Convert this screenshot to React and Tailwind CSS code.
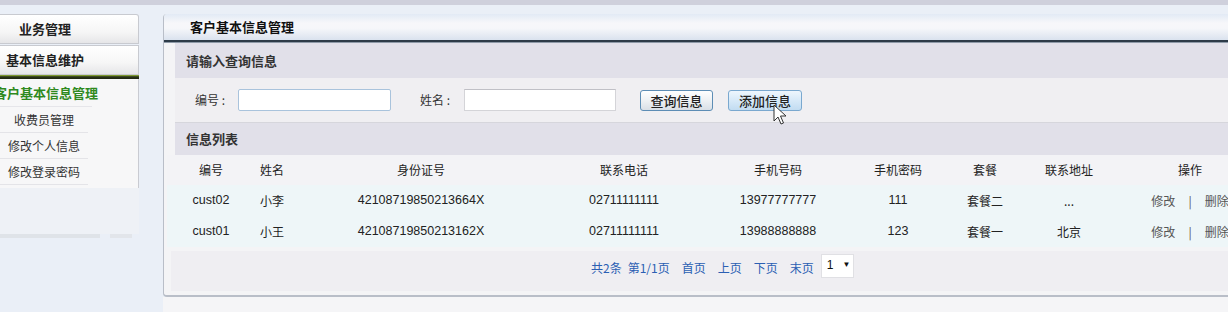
import React from "react";

const cols = [
  { w: "w-[88px]", h: "编号" },
  { w: "w-[34px]", h: "姓名" },
  { w: "w-[264px]", h: "身份证号" },
  { w: "w-[142px]", h: "联系电话" },
  { w: "w-[166px]", h: "手机号码" },
  { w: "w-[74px]", h: "手机密码" },
  { w: "w-[100px]", h: "套餐" },
  { w: "w-[68px]", h: "联系地址" },
  { w: "w-[174px]", h: "操作" },
];

const rows = [
  ["cust02", "小李", "42108719850213664X", "02711111111", "13977777777", "111", "套餐二", "...", null],
  ["cust01", "小王", "42108719850213162X", "02711111111", "13988888888", "123", "套餐一", "北京", null],
];

function Cursor() {
  return (
    <svg className="absolute left-[773px] top-[104px]" width="16" height="22" viewBox="0 0 16 22">
      <path d="M1 1 L1 17 L5 13 L8 20 L10.5 19 L7.5 12 L13 12 Z" fill="#fff" stroke="#333" strokeWidth="1" strokeLinejoin="round" />
    </svg>
  );
}

export default function App() {
  return (
    <div className="relative w-[1228px] h-[312px] overflow-hidden bg-[#eaeff7] font-['Liberation_Sans','Noto_Sans_CJK_SC',sans-serif] text-[12px] text-[#222]">
      <div className="h-[5px] bg-[#cfd0dc]" />
      <div className="flex pt-[9px]">
        {/* Sidebar */}
        <div className="w-[139px] shrink-0 flex flex-col">
          <div className="h-[30px] flex items-center border border-l-0 border-[#c8cad0] rounded-tr-[3px] bg-[linear-gradient(to_bottom,#ffffff,#f6f6f6_60%,#e6e6e8)] font-['Noto_Sans_CJK_SC',sans-serif] font-bold text-[13px] text-[#222]">
            <span className="w-[90px] text-center whitespace-nowrap">业务管理</span>
          </div>
          <div className="mt-[1px] h-[30px] flex items-center border border-l-0 border-[#c8cad0] bg-[linear-gradient(to_bottom,#ffffff,#f6f6f6_60%,#e6e6e8)] font-['Noto_Sans_CJK_SC',sans-serif] font-bold text-[13px] text-[#222]">
            <span className="w-[90px] text-center whitespace-nowrap">基本信息维护</span>
          </div>
          <div className="h-[4px] bg-[linear-gradient(to_bottom,#9fbf3a,#2a3418_45%,#1d2410)]" />
          <div className="h-[109px] bg-[#f7f7f8] border-r border-[#c9cbd2] font-['Noto_Sans_CJK_SC',sans-serif]">
            <div className="w-[92px] h-[28px] flex items-center justify-center whitespace-nowrap font-bold text-[13px] text-[#2f8a1f] border-b border-[#e6e6ea]">
              客户基本信息管理
            </div>
            {["收费员管理", "修改个人信息", "修改登录密码"].map((t) => (
              <div key={t} className="w-[88px] h-[26px] flex items-center justify-center whitespace-nowrap text-[12px] text-[#333] border-b border-[#e4e4e8]">
                {t}
              </div>
            ))}
          </div>
          <div className="h-[46px] bg-[#eef1f6]" />
          <div className="flex gap-[10px] h-[4px]">
            <div className="w-[100px] bg-[#dfe3e8]" />
            <div className="w-[22px] bg-[#e2e5ea]" />
          </div>
        </div>

        {/* Main panel */}
        <div className="ml-[24px] flex-1 min-w-0">
          <div className="h-[283px] border-l border-b-2 border-[#b9bec8] rounded-l-[4px] bg-[#f4f4f6] overflow-hidden">
            <div className="h-[26px] flex items-center pl-[26px] bg-[linear-gradient(to_bottom,#e2eaf5_0%,#f7f7fa_35%,#f6f7fa_55%,#dae2ee_100%)] font-['Noto_Sans_CJK_SC',sans-serif] font-bold text-[13px] text-[#111]">
              客户基本信息管理
            </div>
            <div className="h-[3px] bg-[#2d3b48] border-b border-[#8e9aa8]" />
            <div className="ml-[11px] h-[35px] flex items-center pl-[11px] bg-[#e1e0e9] font-['Noto_Sans_CJK_SC',sans-serif] font-bold text-[13px] text-[#333]">
              请输入查询信息
            </div>
            <div className="ml-[11px] h-[45px] flex items-center bg-[#f0eff2] border-b border-[#d6d6dc] font-['Noto_Sans_CJK_SC',sans-serif] text-[12px] text-[#333]">
              <span className="ml-[20px] w-[43px] whitespace-nowrap">编号 :</span>
              <div className="w-[153px] h-[22px] bg-white border border-[#a9c3dc] rounded-[2px]" />
              <span className="ml-[29px] w-[44px] whitespace-nowrap">姓名 :</span>
              <div className="w-[152px] h-[22px] bg-white border border-[#d4d4d8] border-t-[#c0c0c6]" />
              <button className="ml-[24px] w-[73px] h-[21px] rounded-[3px] border border-[#5d8db5] bg-[linear-gradient(to_bottom,#ffffff,#eef1f4_50%,#d9dfe6)] text-[13px] font-medium text-[#222] font-['Noto_Sans_CJK_SC',sans-serif] leading-none">
                查询信息
              </button>
              <button className="ml-[15px] w-[74px] h-[21px] rounded-[3px] border border-[#7aa8cf] bg-[linear-gradient(to_bottom,#eef6fd,#d7e9f8_50%,#c2dcf1)] text-[13px] font-medium text-[#222] font-['Noto_Sans_CJK_SC',sans-serif] leading-none">
                添加信息
              </button>
            </div>
            <div className="ml-[11px] h-[32px] flex items-center pl-[11px] bg-[#e1e0e9] font-['Noto_Sans_CJK_SC',sans-serif] font-bold text-[13px] text-[#333]">
              信息列表
            </div>
            <div className="ml-[3px] w-[1110px]">
              <div className="flex h-[30px] items-center bg-[#f3f3f6] font-['Noto_Sans_CJK_SC',sans-serif] text-[12px] text-[#222]">
                {cols.map((c) => (
                  <div key={c.h} className={`${c.w} shrink-0 text-center whitespace-nowrap`}>{c.h}</div>
                ))}
              </div>
              <div className="bg-[#eef6f8]">
                {rows.map((r) => (
                  <div key={r[0]} className="flex h-[31px] items-center text-[12.5px] text-[#222]">
                    {r.map((v, i) =>
                      i === 8 ? (
                        <div key={i} className={`${cols[i].w} shrink-0 flex justify-center gap-[13px] whitespace-nowrap font-['Noto_Sans_CJK_SC',sans-serif] text-[12px] text-[#555]`}>
                          <span>修改</span>
                          <span>|</span>
                          <span>删除</span>
                        </div>
                      ) : (
                        <div key={i} className={`${cols[i].w} shrink-0 text-center whitespace-nowrap ${i === 1 || i === 6 || i === 7 ? "font-['Noto_Sans_CJK_SC',sans-serif] text-[12px]" : ""}`}>
                          {v}
                        </div>
                      )
                    )}
                  </div>
                ))}
              </div>
            </div>
            <div className="ml-[7px] mt-[4px] h-[40px] bg-[#efeef2] flex items-start pt-[3px]">
              <div className="ml-[420px] flex items-center h-[24px] font-['Noto_Sans_CJK_SC',sans-serif] text-[12px] text-[#2b5fb3] whitespace-nowrap">
                <span className="mt-[4px]">共2条</span>
                <span className="mt-[4px] ml-[6px]">第1/1页</span>
                <span className="mt-[4px] ml-[12px]">首页</span>
                <span className="mt-[4px] ml-[12px]">上页</span>
                <span className="mt-[4px] ml-[12px]">下页</span>
                <span className="mt-[4px] ml-[12px]">末页</span>
                <div className="ml-[7px] w-[33px] h-[24px] bg-white border border-[#e0e0e4] flex items-start pt-[1px] pl-[5px] text-[#111] font-['Liberation_Sans',sans-serif]">
                  <span>1</span>
                  <span className="ml-[9px] text-[8px] mt-[3px]">▼</span>
                </div>
              </div>
            </div>
          </div>
          <div className="h-[20px] bg-[#f5f5f7]" />
        </div>
      </div>
      <Cursor />
    </div>
  );
}
